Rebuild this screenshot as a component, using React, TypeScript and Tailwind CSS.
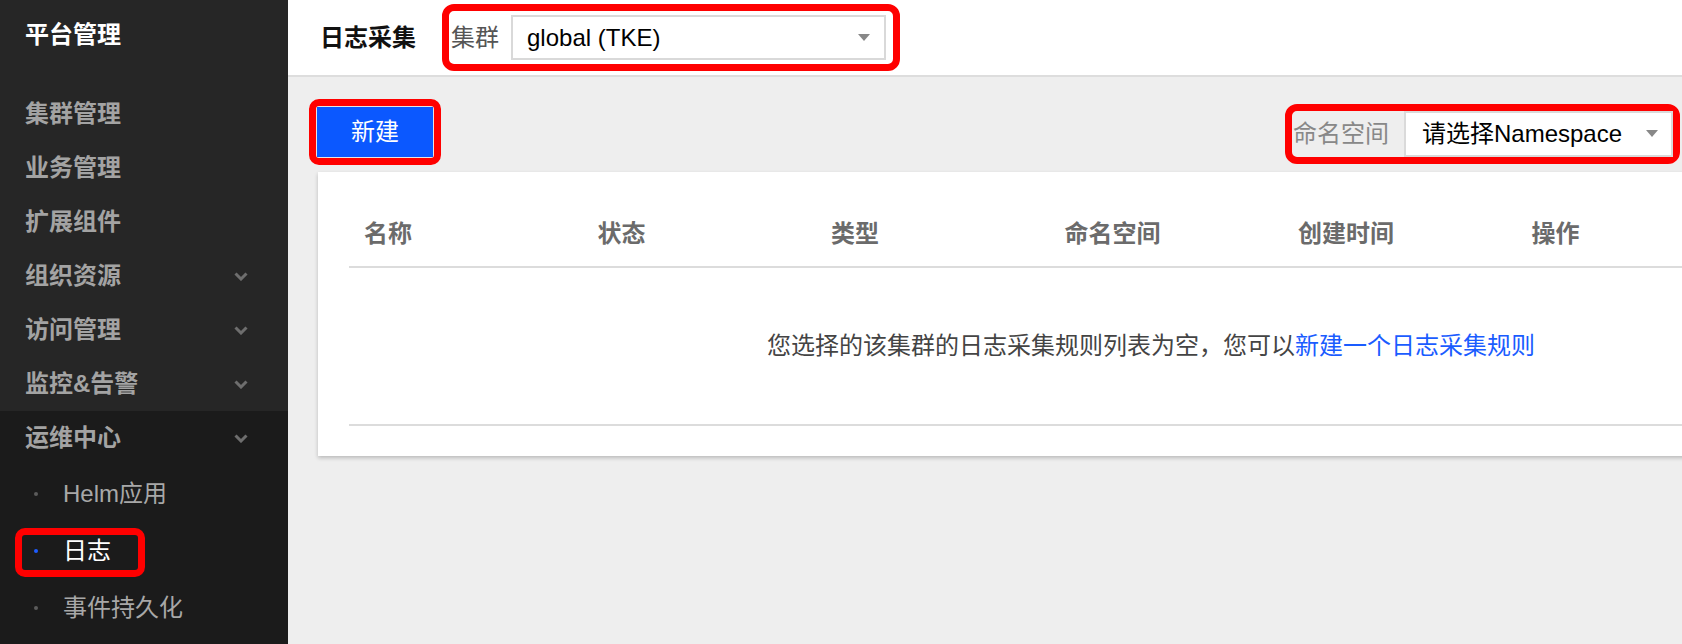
import React from "react";

const font = "font-['Liberation_Sans','Noto_Sans_CJK_SC',sans-serif]";

type MenuItem = {
  label: string;
  expandable?: boolean;
};

const menu: MenuItem[] = [
  { label: "集群管理" },
  { label: "业务管理" },
  { label: "扩展组件" },
  { label: "组织资源", expandable: true },
  { label: "访问管理", expandable: true },
  { label: "监控&告警", expandable: true },
];

const subItems = [
  { label: "Helm应用", active: false },
  { label: "日志", active: true },
  { label: "事件持久化", active: false },
];

const columns = ["名称", "状态", "类型", "命名空间", "创建时间", "操作"];

function Chevron() {
  return (
    <svg width="14" height="9" viewBox="0 0 14 9" fill="none">
      <path d="M1.5 1.5 L7 7 L12.5 1.5" stroke="#6e6e6e" strokeWidth="3" />
    </svg>
  );
}

function Caret() {
  return (
    <svg width="12" height="7" viewBox="0 0 12 7">
      <path d="M0 0 H12 L6 7 Z" fill="#888888" />
    </svg>
  );
}

function Sidebar() {
  return (
    <aside className="flex w-[288px] shrink-0 flex-col bg-[#262626]">
      <div className="h-[87px] pl-[25px] pt-[21px]">
        <h1 className="text-[24px] font-bold leading-[28px] text-white">
          平台管理
        </h1>
      </div>
      {menu.map((item) => (
        <div
          key={item.label}
          className="flex h-[54px] items-center justify-between pl-[25px] pr-[40px]"
        >
          <span className="text-[24px] font-bold text-[#a3a3a3]">
            {item.label}
          </span>
          {item.expandable && <Chevron />}
        </div>
      ))}
      <div className="flex flex-1 flex-col bg-[#1b1b1b]">
        <div className="flex h-[54px] items-center justify-between pl-[25px] pr-[40px]">
          <span className="text-[24px] font-bold text-[#a3a3a3]">运维中心</span>
          <Chevron />
        </div>
        {subItems.map((item) => (
          <div key={item.label} className="relative flex h-[57px] items-center">
            <span
              className={
                item.active
                  ? "ml-[34px] h-[4px] w-[4px] rounded-full bg-[#1d5cff]"
                  : "ml-[34px] h-[4px] w-[4px] rounded-full bg-[#5c5c5c]"
              }
            />
            <span
              className={
                item.active
                  ? "ml-[25px] text-[24px] text-white"
                  : "ml-[25px] text-[24px] text-[#a8a8a8]"
              }
            >
              {item.label}
            </span>
            {item.active && (
              <div className="absolute left-[15px] top-[6px] h-[49px] w-[130px] rounded-[10px] border-[7px] border-[#ff0000]" />
            )}
          </div>
        ))}
      </div>
    </aside>
  );
}

function Header() {
  return (
    <header className="flex h-[77px] shrink-0 items-center border-b-2 border-[#dddddd] bg-white pl-[32px]">
      <h2 className="text-[24px] font-bold text-[#111]">日志采集</h2>
      <div className="ml-[26px] flex h-[67px] w-[458px] items-center rounded-[12px] border-[7px] border-[#ff0000] bg-white pl-[2px]">
        <span className="text-[24px] text-[#555]">集群</span>
        <div className="ml-[12px] flex h-[45px] w-[375px] items-center justify-between border-2 border-[#d9d9d9] bg-white pl-[14px] pr-[14px]">
          <span className="text-[24px] text-black">global (TKE)</span>
          <Caret />
        </div>
      </div>
    </header>
  );
}

function Toolbar() {
  return (
    <div className="flex items-center justify-between pl-[21px] pr-[2px] pt-[22px]">
      <div className="rounded-[10px] border-[7px] border-[#ff0000] bg-[#e4e4e4] p-[1px]">
        <button className="flex h-[50px] w-[116px] items-center justify-center bg-[#0b58ff] text-[24px] text-white">
          新建
        </button>
      </div>
      <div className="mt-[3px] flex h-[60px] items-center rounded-[12px] border-[7px] border-[#ff0000] bg-[#eeeeee] pl-[1px]">
        <span className="text-[24px] text-[#888]">命名空间</span>
        <div className="ml-[15px] flex h-[46px] w-[269px] items-center justify-between self-start border-2 border-[#dadada] bg-white pl-[16px] pr-[13px]">
          <span className="text-[24px] text-black">请选择Namespace</span>
          <Caret />
        </div>
      </div>
    </div>
  );
}

function LogTable() {
  return (
    <div className="ml-[30px] mt-[7px] w-[1666px] bg-white px-[31px] pb-[30px] pt-[30px] shadow-[0_2px_4px_rgba(0,0,0,0.22)]">
      <div className="flex h-[66px] items-center border-b-2 border-[#dcdcdc]">
        {columns.map((col) => (
          <div
            key={col}
            className="w-[233.5px] shrink-0 pl-[15px] text-[24px] font-bold text-[#6b6b6b]"
          >
            {col}
          </div>
        ))}
      </div>
      <div className="flex h-[158px] items-center justify-center border-b-2 border-[#dcdcdc]">
        <p className="text-[24px] text-[#444]">
          您选择的该集群的日志采集规则列表为空，您可以
          <a className="text-[#1a5cff]">新建一个日志采集规则</a>
        </p>
      </div>
    </div>
  );
}

export default function App() {
  return (
    <div className={`flex h-[644px] w-[1682px] overflow-hidden ${font}`}>
      <Sidebar />
      <main className="flex min-w-0 flex-1 flex-col overflow-hidden bg-[#eeeeee]">
        <Header />
        <Toolbar />
        <LogTable />
      </main>
    </div>
  );
}
